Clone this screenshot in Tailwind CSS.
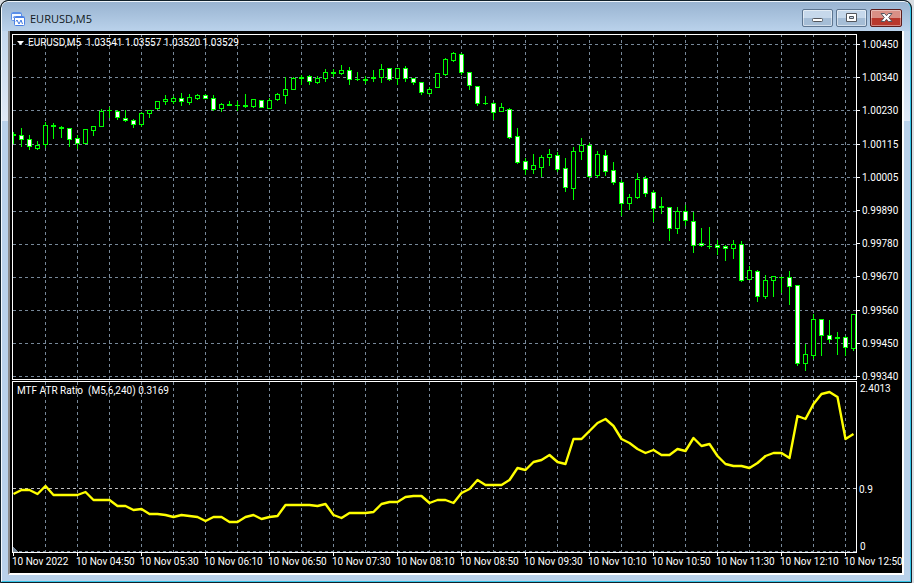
<!DOCTYPE html>
<html lang="en">
<head>
  <meta charset="UTF-8" />
  <meta name="viewport" content="width=device-width,initial-scale=1" />
  <title>EURUSD,M5</title>
  <script src="https://cdn.jsdelivr.net/npm/@tailwindcss/browser@4"></script>
</head>

<body class="bg-[#d8dde2] pr-[2px]">

<!-- ───────────  Window  ─────────── -->
<div class="h-screen min-h-80 border border-[#10202a] rounded-t-lg bg-black overflow-hidden">
<div class="h-full flex flex-col border-t border-l border-r border-b border-t-[#eef5fb] border-l-[#f4f9fd] border-r-[#35c5e8] border-b-[#35c5e8] rounded-t-[7px]
            bg-[#b9d1ea]">

  <!-- Title bar -->
  <header class="h-[29px] shrink-0 flex items-center justify-between pl-[9px] pr-[8px] rounded-t-md bg-linear-to-b from-[#99b4d1] to-[#bad2eb]">
    <div class="flex items-center gap-[5px] pt-[4px]">
      <svg class="w-[14px] h-[14px]" viewBox="0 0 14 14" fill="none" aria-hidden="true">
        <rect x=".5" y=".5" width="10" height="8" rx="1" fill="#f4f9ff" stroke="#5b8fe8"/>
        <path d="M1 1.500h9" stroke="#5b8fe8"/>
        <path d="M2 6l1.500-2 1.500 2 1.500-2" stroke="#6d9cf0"/>
        <rect x="3.500" y="4.500" width="10" height="9" rx="1" fill="#fff" stroke="#4a80e4"/>
        <path d="M4 5.500h9" stroke="#4a80e4"/>
        <path d="M5 9.500l1-1.500 2 4 2-4 1.500 4" stroke="#3f78e0"/>
      </svg>
      <h1 class="font-['Open_Sans','Noto_Sans',sans-serif] text-[11px] leading-4 text-[#101820]">EURUSD,M5</h1>
    </div>
    <div class="flex gap-[3px] pt-[3px]">
      <button aria-label="Minimize" class="w-[31px] h-[18px] grid place-items-center rounded-[2px] border border-[#5d7590] bg-linear-to-b from-[#c6d8eb] from-50% to-[#a5bdd6] to-50% inset-ring inset-ring-white/50">
        <svg class="w-[13px] h-[12px]" viewBox="0 0 13 12"><rect x="1.500" y="6.500" width="10" height="3" rx="1" fill="#fff" stroke="#53565c"/></svg>
      </button>
      <button aria-label="Maximize" class="w-[31px] h-[18px] grid place-items-center rounded-[2px] border border-[#5d7590] bg-linear-to-b from-[#c6d8eb] from-50% to-[#a5bdd6] to-50% inset-ring inset-ring-white/50">
        <svg class="w-[13px] h-[12px]" viewBox="0 0 13 12"><path d="M1.500 1.500h10v8h-10zM4.500 4.500v2h4v-2z" fill="#fff" fill-rule="evenodd" stroke="#53565c"/></svg>
      </button>
      <button aria-label="Close" class="w-[32px] h-[18px] grid place-items-center rounded-[2px] border border-[#5c1c1c] bg-linear-to-b from-[#d99086] from-50% to-[#b8382c] to-50% inset-ring inset-ring-white/40">
        <svg class="w-[13px] h-[12px]" viewBox="0 0 13 12"><path d="M1 1.500h3.500l2 2.200 2-2.200H12L8.700 5.500l3.300 4H8.500l-2-2.200-2 2.200H1l3.300-4z" fill="#fff" stroke="#55575f"/></svg>
      </button>
    </div>
  </header>

  <!-- Frame around the chart -->
  <div class="flex-1 min-h-0 px-[6px] pb-[6px] bg-linear-to-b from-[#c4d8ee] via-[#dfe9f6] via-[90px] to-[#b9d1ea] to-[90px]">
    <main class="h-full border-l-2 border-r-2 border-b-2 border-l-[#8a8a8a] border-r-white border-b-white bg-black text-white
                 font-['Roboto','DejaVu_Sans_Condensed',sans-serif] text-[10px] leading-[11px]
                 pt-[3px] pl-[2px] grid grid-cols-[minmax(0,1fr)_45px] grid-rows-[minmax(0,347fr)_minmax(0,172fr)_20px]">

      <!-- Price chart -->
      <section class="relative mb-px">
        <svg id="price" class="block w-full h-full" viewBox="12 34 845 346" preserveAspectRatio="none" shape-rendering="crispEdges"></svg>
        <div class="absolute top-[3px] left-[5px] flex items-center gap-[4px] whitespace-pre">
          <svg class="w-[7px] h-[4px]" viewBox="0 0 7 4"><path d="M0 0h7L3.500 4z" fill="#fff"/></svg>
          <p>EURUSD,M5  1.03541 1.03557 1.03520 1.03529</p>
        </div>
      </section>
      <ul id="prices" class="flex flex-col justify-between pt-[5px] -mb-px"></ul>

      <!-- Indicator -->
      <section class="relative">
        <svg id="atr" class="block w-full h-full" viewBox="12 381 845 172" preserveAspectRatio="none" shape-rendering="crispEdges"></svg>
        <p class="absolute top-[4px] left-[5px] whitespace-pre">MTF ATR Ratio  (M5,6,240) 0.3169</p>
      </section>
      <div class="relative flex flex-col justify-between pt-[2px] pb-[1px] pl-[3px]">
        <span>2.4013</span>
        <span class="absolute left-[2px] top-[60%]">0.9</span>
        <span>0</span>
      </div>

      <!-- Time axis -->
      <ul id="times" class="grid grid-cols-[repeat(13,minmax(0,64fr))_minmax(0,12fr)] pl-px whitespace-nowrap"></ul>
    </main>
  </div>
</div>
</div>

<script>
const PRICES = ["1.00450","1.00340","1.00230","1.00115","1.00005","0.99890","0.99780","0.99670","0.99560","0.99450","0.99340"];
const PRICE_Y = [44,77,110,144,177,211,244,277,310,343,376];
const TIMES = ["10 Nov 2022","10 Nov 04:50","10 Nov 05:30","10 Nov 06:10","10 Nov 06:50","10 Nov 07:30","10 Nov 08:10",
               "10 Nov 08:50","10 Nov 09:30","10 Nov 10:10","10 Nov 10:50","10 Nov 11:30","10 Nov 12:10","10 Nov 12:50"];

/* -------- candles: high, body top, body bottom, low, falling -------- */
const CANDLES = [
  [132,134,136,144,0],[128,135,140,147,1],[135,139,147,150,1],[141,145,149,150,0],[122,125,145,148,0],
  [123,125,127,139,0],[126,127,129,138,0],[128,128,140,147,1],[135,138,144,149,1],[129,129,144,144,0],
  [126,126,131,136,0],[109,111,127,127,0],[107,110,111,118,0],[110,111,118,120,1],[110,118,121,122,1],
  [119,120,125,128,1],[112,113,125,127,0],[110,110,114,118,0],[101,101,109,110,0],[95,99,102,105,0],
  [96,98,102,104,0],[93,98,102,106,1],[94,97,103,105,0],[94,95,99,100,0],[94,95,99,99,1],
  [95,98,110,111,1],[103,104,109,112,0],[101,104,106,106,0],[101,105,106,111,0],[94,105,107,108,0],
  [99,99,107,108,0],[100,100,108,108,1],[98,100,109,109,0],[93,94,100,101,0],[77,89,96,104,0],
  [77,78,90,90,0],[75,77,79,85,0],[75,76,82,85,1],[76,78,83,84,0],[69,72,79,82,0],
  [69,72,74,77,0],[65,70,74,75,0],[67,70,80,85,1],[72,79,80,81,0],[76,79,81,84,0],
  [70,77,79,82,0],[64,69,78,83,0],[68,68,80,81,1],[68,68,79,85,0],[66,68,79,82,1],
  [78,78,83,85,1],[82,82,93,95,1],[87,89,94,95,0],[73,73,88,88,0],[58,59,75,76,0],
  [52,53,61,62,0],[53,54,73,75,1],[72,72,86,90,1],[86,86,104,106,1],[96,103,104,105,0],
  [102,103,113,120,1],[103,107,112,112,0],[108,109,138,139,1],[128,136,163,164,1],[158,161,170,175,1],
  [154,165,170,174,0],[155,157,168,177,0],[149,154,158,166,0],[152,155,170,172,1],[158,168,188,192,1],
  [147,151,189,200,0],[138,145,152,160,0],[143,145,177,178,1],[151,154,176,178,0],[150,155,172,176,1],
  [162,170,183,185,1],[180,182,204,216,1],[194,197,204,210,0],[173,179,198,199,0],[176,178,194,197,1],
  [190,192,209,222,1],[197,206,208,214,0],[207,207,229,241,1],[207,211,229,234,0],[205,211,221,226,1],
  [212,221,246,253,1],[228,243,246,247,1],[227,246,247,249,0],[240,245,248,255,1],[245,246,249,261,1],
  [240,244,249,259,0],[241,244,281,282,1],[266,270,280,280,0],[270,271,297,302,1],[275,280,297,299,0],
  [276,276,281,297,0],[277,277,278,293,0],[271,277,287,305,1],[285,285,364,366,1],[344,354,364,371,0],
  [314,319,356,359,0],[319,319,336,356,1],[320,335,340,343,1],[332,337,339,355,0],[336,337,348,356,1],
  [314,314,349,351,0],
];

const ATR = [494,490,490,494,486,495,495,495,495,492,500,500,500,506,506,510,509,514,514,515,517,515,516,517,521,517,517,522,
  522,517,515,519,517,516,505,505,505,505,506,504,515,518,513,513,513,512,504,502,502,497,496,496,503,500,500,503,493,489,480,
  485,485,485,480,468,470,462,460,455,462,464,439,439,431,423,419,426,439,443,449,453,450,455,455,449,451,438,446,444,456,
  464,466,466,468,463,456,453,453,458,416,419,404,394,392,397,439,434];

const rect = (x,y,w,h,fill)=>`<rect x="${x}" y="${y}" width="${w}" height="${h}" fill="${fill}"/>`;
const dash = (d,color)=>`<path d="${d}" stroke="${color}" stroke-dasharray="3 3" fill="none"/>`;

function verticals(y1,y2){
  let s = "";
  for(let x=45; x<856; x+=32) s += dash(`M${x+.5} ${y1}V${y2}`,"#778899");
  return s;
}

/* -------- price panel -------- */
let s = verticals(34,379);
PRICE_Y.forEach(y=>{ s += dash(`M13 ${y+.5}H856`,"#778899"); });
CANDLES.forEach(([hi,top,bot,lo,down],i)=>{
  const x = 13 + i*8;
  s += rect(x, hi, 1, lo-hi, "#00ff00") + rect(x-2, top, 5, bot-top, "#00ff00");
  if(bot-top > 2) s += rect(x-1, top+1, 3, bot-top-2, down ? "#fff" : "#000");
});
s += `<path d="M12.500 34.500H856.500V379.500H12.500z" fill="none" stroke="#fff"/>`;
document.getElementById("price").innerHTML = s;

/* -------- indicator panel -------- */
s = verticals(382,552) + dash("M13 551.500H856","#778899") + dash("M13 488.500H856","#c0c0c0");
s += `<path d="M13 547v5h5z" fill="#778899"/>`;
s += `<polyline points="${ATR.map((y,i)=>`${13.5+i*8},${y}`).join(" ")}" fill="none" stroke="#ffff00" stroke-width="2.4"
       stroke-linejoin="round" shape-rendering="geometricPrecision"/>`;
s += `<path d="M12.500 381.500H856.500V552.500H12.500z" fill="none" stroke="#fff"/>`;
document.getElementById("atr").innerHTML = s;

/* -------- axes -------- */
document.getElementById("prices").innerHTML = PRICES.map(p=>
  `<li class="flex items-center gap-[2px] before:w-[3px] before:h-px before:bg-white">${p}</li>`).join("");
document.getElementById("times").innerHTML = TIMES.map(t=>
  `<li class="before:block before:w-px before:h-[3px] before:bg-white"><span class="-ml-px">${t}</span></li>`).join("");
</script>
</body>
</html>
